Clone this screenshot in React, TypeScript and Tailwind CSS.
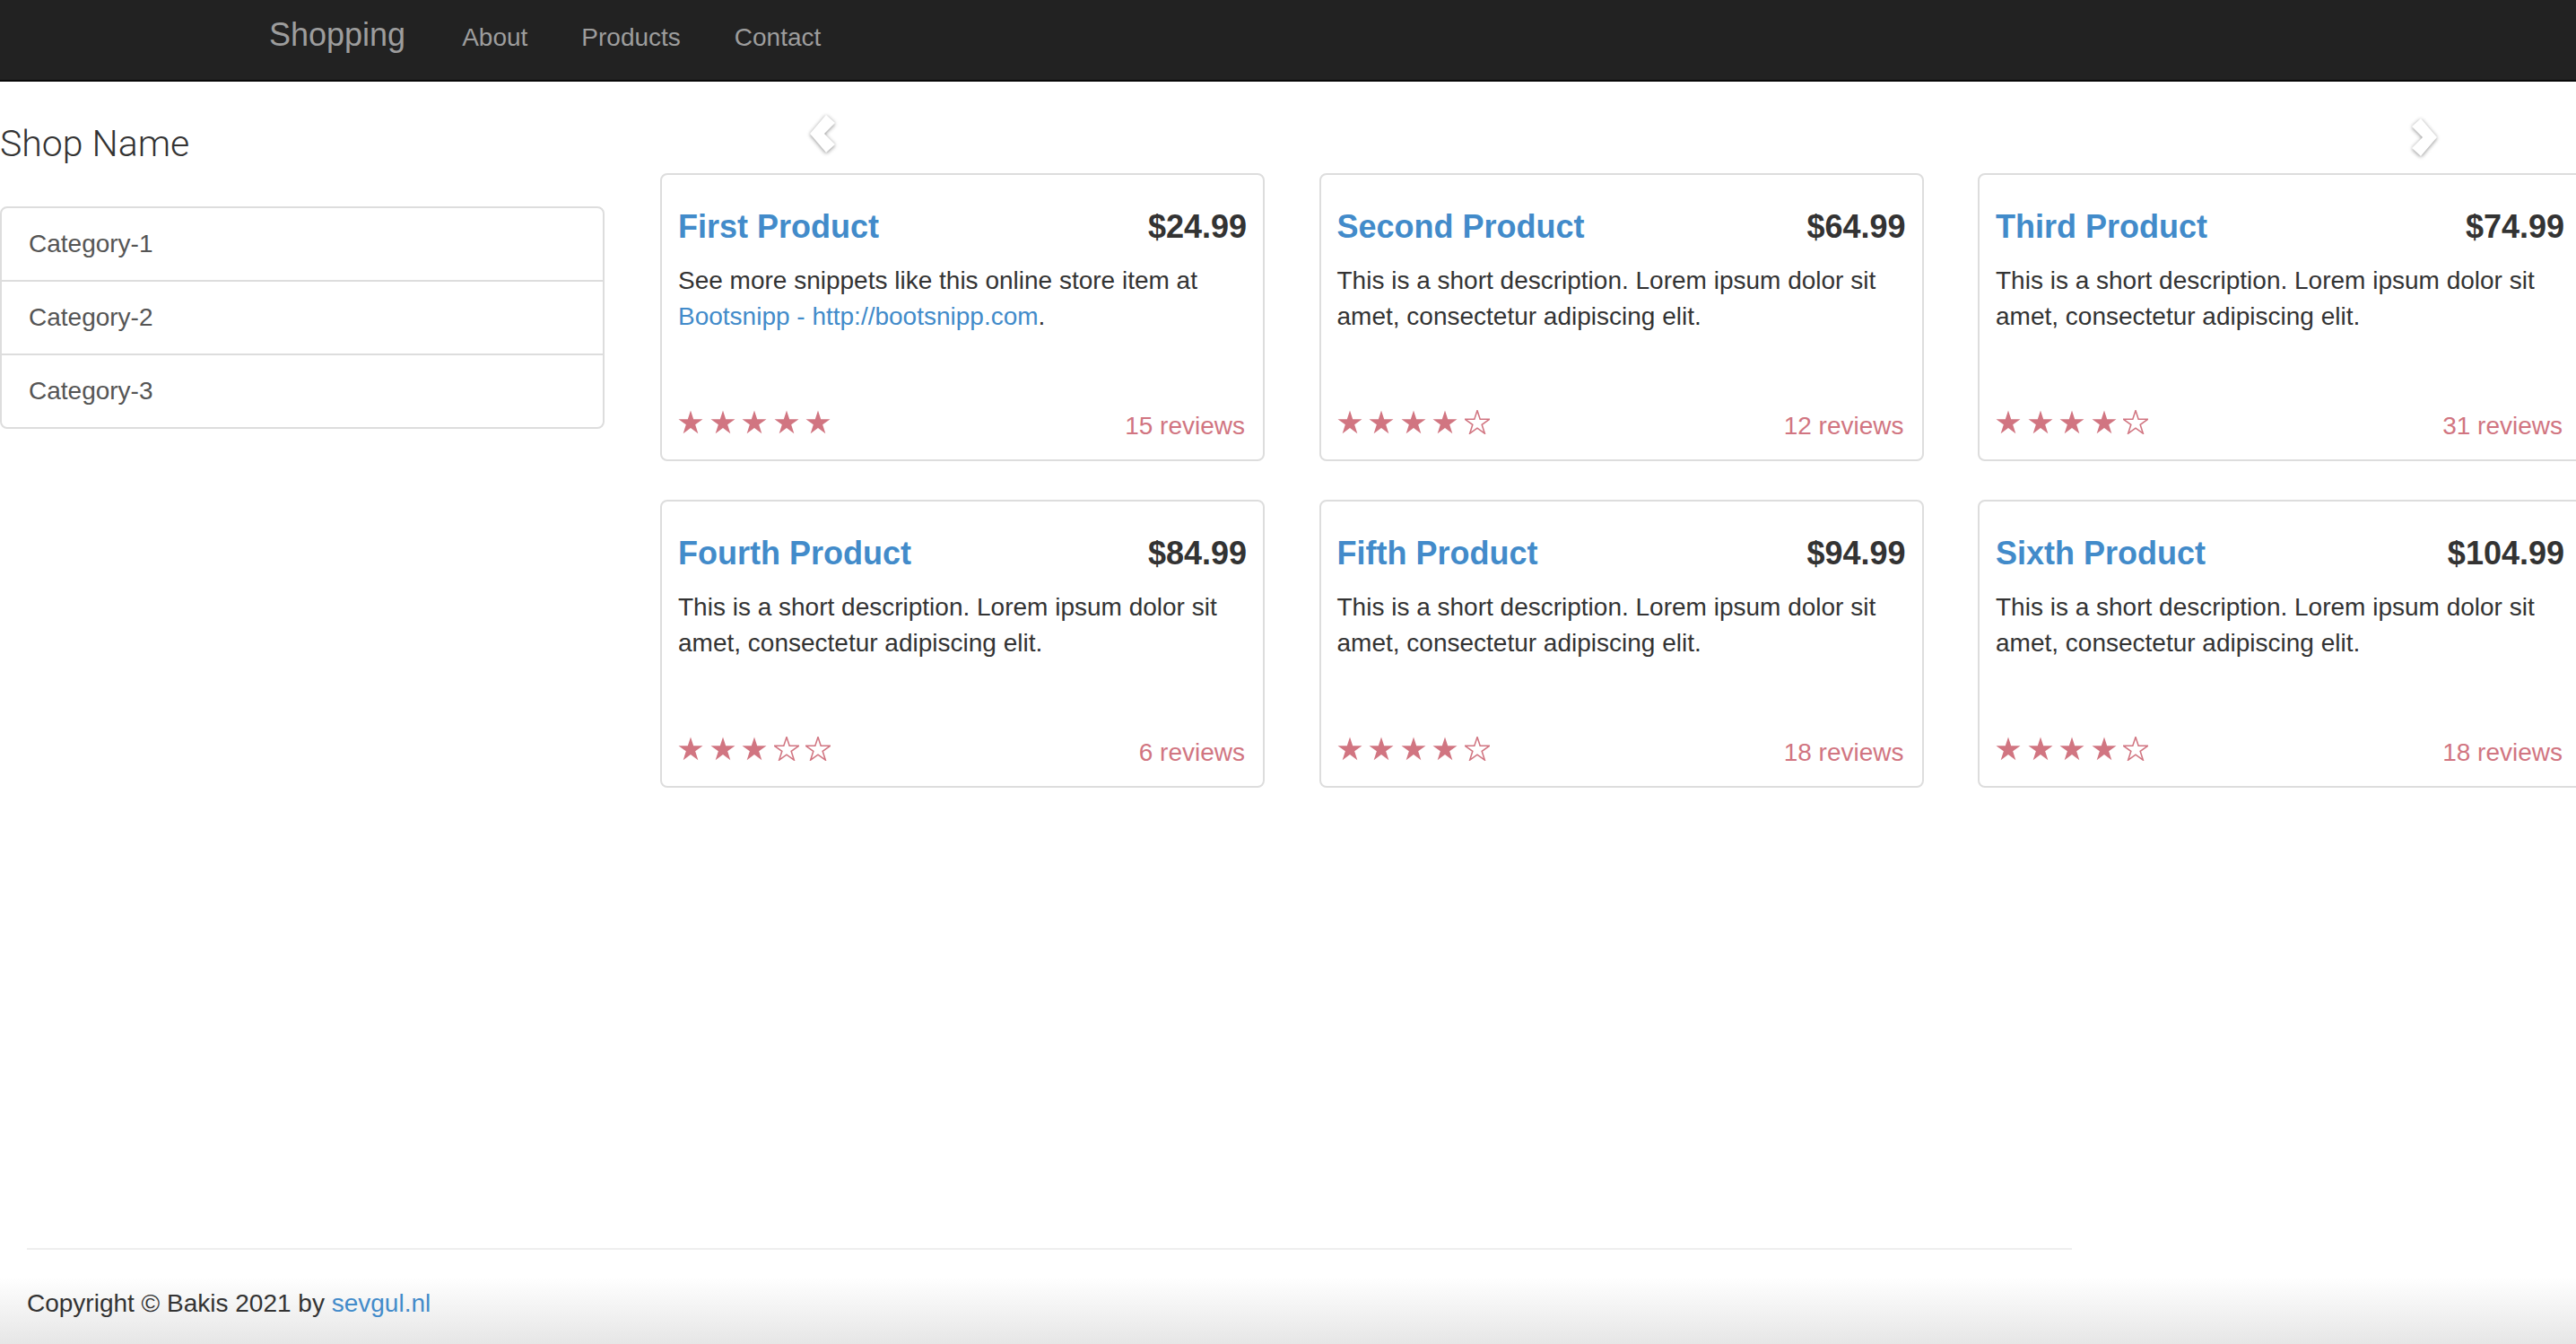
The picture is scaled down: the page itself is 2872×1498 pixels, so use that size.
import React from 'react';

type Product = {
  name: string;
  price: string;
  reviews: number;
  stars: number;
  desc?: React.ReactNode;
};

const shortDesc = 'This is a short description. Lorem ipsum dolor sit amet, consectetur adipiscing elit.';

const products: Product[] = [
  {
    name: 'First Product',
    price: '$24.99',
    reviews: 15,
    stars: 5,
    desc: (
      <>
        See more snippets like this online store item at{' '}
        <a href="#" className="text-[#428bca]">
          Bootsnipp - http://bootsnipp.com
        </a>
        .
      </>
    ),
  },
  { name: 'Second Product', price: '$64.99', reviews: 12, stars: 4 },
  { name: 'Third Product', price: '$74.99', reviews: 31, stars: 4 },
  { name: 'Fourth Product', price: '$84.99', reviews: 6, stars: 3 },
  { name: 'Fifth Product', price: '$94.99', reviews: 18, stars: 4 },
  { name: 'Sixth Product', price: '$104.99', reviews: 18, stars: 4 },
];

const STAR = '14,0 17.3,10.17 28,10.17 19.35,16.46 22.65,26.63 14,20.34 5.35,26.63 8.65,16.46 0,10.17 10.7,10.17';

function Star({ filled }: { filled: boolean }) {
  return (
    <svg width="28" height="27" viewBox="-0.5 -0.5 29 28" className="shrink-0">
      {filled ? (
        <polygon points={STAR} fill="#d17581" />
      ) : (
        <polygon points={STAR} fill="none" stroke="#d17581" strokeWidth="1.6" strokeLinejoin="miter" />
      )}
    </svg>
  );
}

function Chevron({ dir }: { dir: 'left' | 'right' }) {
  return (
    <svg
      width="30"
      height="42"
      viewBox="0 0 30 42"
      className="drop-shadow-[0_1px_2px_rgba(0,0,0,0.45)]"
    >
      {dir === 'left' ? (
        <polygon points="0,21 18,0 28,9 16,21 28,33 18,42" fill="#ffffff" />
      ) : (
        <polygon points="30,21 12,0 2,9 14,21 2,33 12,42" fill="#ffffff" />
      )}
    </svg>
  );
}

function ProductCard({ p }: { p: Product }) {
  return (
    <div className="w-[674px] rounded-[8px] border-2 border-[#ddd] bg-white">
      <div className="h-[260px] overflow-hidden p-[18px]">
        <h4 className="mt-[20px] mb-[20px] flex justify-between text-[36px] font-bold leading-[1.1]">
          <a href="#" className="text-[#428bca]">
            {p.name}
          </a>
          <span className="text-[#333]">{p.price}</span>
        </h4>
        <p className="text-[28px] leading-[40px] text-[#333]">{p.desc ?? shortDesc}</p>
      </div>
      <div className="flex justify-between pr-[20px] pl-[18px] mb-[17px]">
        <div className="flex h-[40px] items-start gap-[7.5px] pt-[2px]">
          {[0, 1, 2, 3, 4].map((i) => (
            <Star key={i} filled={i < p.stars} />
          ))}
        </div>
        <p className="text-[28px] leading-[40px] text-[#d17581]">{p.reviews} reviews</p>
      </div>
    </div>
  );
}

export default function App() {
  return (
    <div className="relative flex h-[1498px] w-[2872px] flex-col overflow-hidden bg-white font-['Liberation_Sans',Arial,sans-serif] text-[#333]">
      {/* window shadow at bottom edge */}
      <div className="pointer-events-none absolute inset-x-0 bottom-0 h-[75px] bg-linear-to-b from-white/0 to-[#e6e6e6]" />

      {/* Navbar */}
      <nav className="h-[91px] shrink-0 border-b-2 border-[#080808] bg-[#222]">
        <div className="mx-auto flex w-[2340px] items-baseline px-[30px] pt-[19px]">
          <a href="#" className="ml-[4px] mr-[33px] text-[36px] leading-[40px] text-[#9d9d9d]">
            Shopping
          </a>
          {['About', 'Products', 'Contact'].map((l) => (
            <a key={l} href="#" className="px-[30px] text-[28px] leading-[40px] text-[#9d9d9d]">
              {l}
            </a>
          ))}
        </div>
      </nav>

      {/* Main */}
      <div className="mt-[40px] flex items-start">
        <div className="w-[674px] shrink-0">
          <p className="mb-[40px] font-['Roboto',sans-serif] text-[41px] font-light leading-[59px] text-[#333]">
            Shop Name
          </p>
          <div className="rounded-[8px] border-2 border-[#ddd] text-[28px] leading-[40px] text-[#555]">
            <a href="#" className="block px-[30px] py-[20px]">
              Category-1
            </a>
            <a href="#" className="block border-t-2 border-[#ddd] px-[30px] py-[20px]">
              Category-2
            </a>
            <a href="#" className="block border-t-2 border-[#ddd] px-[30px] py-[20px]">
              Category-3
            </a>
          </div>
        </div>

        <div className="ml-[62px] shrink-0">
          <div className="flex h-[62px] items-start pl-[167px]">
            <div className="-mt-[3px]">
              <Chevron dir="left" />
            </div>
            <div className="ml-[1754px] mt-[1px]">
              <Chevron dir="right" />
            </div>
          </div>
          <div className="grid grid-cols-[repeat(3,674px)] gap-x-[60.5px] gap-y-[43px]">
            {products.map((p) => (
              <ProductCard key={p.name} p={p} />
            ))}
          </div>
        </div>
      </div>

      {/* Footer */}
      <footer className="relative mt-auto w-[2340px] px-[30px] pb-[25px]">
        <hr className="mt-[40px] mb-[40px] border-0 border-t-2 border-[#eee]" />
        <p className="text-[28px] leading-[40px] text-[#333]">
          Copyright © Bakis 2021 by{' '}
          <a href="#" className="text-[#428bca]">
            sevgul.nl
          </a>
        </p>
      </footer>
    </div>
  );
}
